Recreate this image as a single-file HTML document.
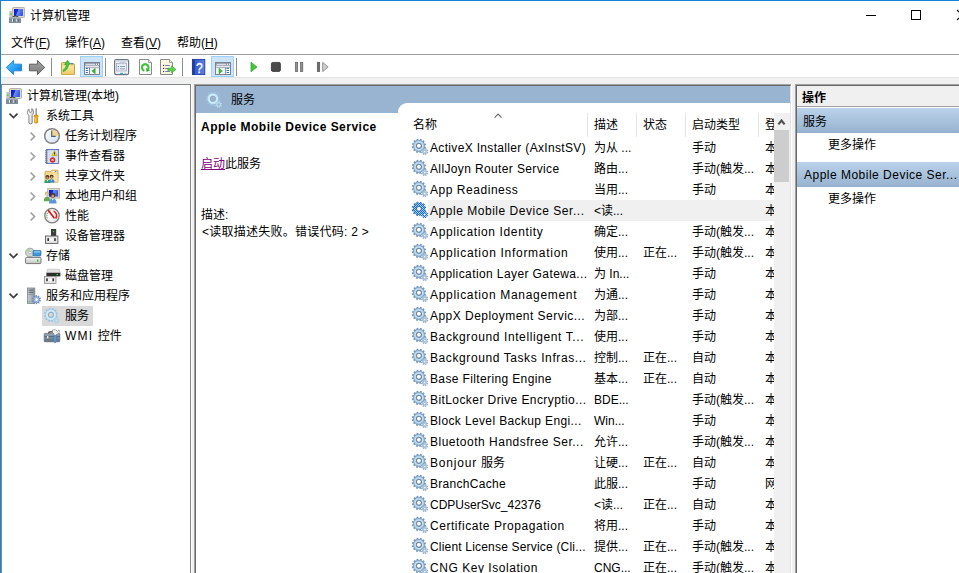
<!DOCTYPE html>
<html lang="zh-CN">
<head>
<meta charset="utf-8">
<title>计算机管理</title>
<style>
*{box-sizing:border-box;margin:0;padding:0}
html,body{width:959px;height:573px;overflow:hidden;background:#f0f0f0}
body{font-family:"Liberation Sans","Noto Sans CJK SC",sans-serif;font-size:12px;color:#000;position:relative}
.abs{position:absolute}
.t{position:absolute;white-space:nowrap;line-height:16px;height:16px}
svg{position:absolute;overflow:visible}
#win{position:absolute;left:0;top:0;width:959px;height:573px;overflow:hidden;background:#f0f0f0}
#title{position:absolute;left:1px;top:1px;width:958px;height:30px;background:#fff}
#menu{position:absolute;left:1px;top:31px;width:958px;height:23px;background:#fff}
#menuline{position:absolute;left:1px;top:54px;width:958px;height:1px;background:#a0a0a0}
#tool{position:absolute;left:1px;top:55px;width:958px;height:22px;background:#fff}
#toolline{position:absolute;left:1px;top:77px;width:958px;height:1px;background:#e3e3e3}
u{text-decoration:underline;text-underline-offset:1px}
#left{position:absolute;left:1px;top:84px;width:190px;height:495px;background:#fff;border-top:1px solid #828790;border-right:1px solid #828790;border-left:1px solid #828790}
#mid{position:absolute;left:194px;top:84px;width:598px;height:495px;background:#fff;border-top:2px solid #696969;border-left:2px solid #696969;border-right:2px solid #e3e3e3;overflow:hidden}
#right{position:absolute;left:795px;top:84px;width:170px;height:495px;background:#fff;border-top:2px solid #696969;border-left:2px solid #696969;overflow:hidden}
.ln{position:absolute}
#band{position:absolute;left:0;top:0;width:594px;height:27px;background:#99b4d1}
#list{position:absolute;left:398px;top:103px;width:392px;height:480px;background:#fff;border-top-left-radius:9px;overflow:hidden}
.row{position:absolute;left:0;width:376px;height:21px}
.row .t{top:3px}
.gi{left:14px;top:2px}
.selbg{position:absolute;left:30px;top:0;width:346px;height:21px;background:#f0f0f0}
.c1{left:32px}.c2{left:196px}.c3{left:245px}.c4{left:294px}.c5{left:367px}
.sep{position:absolute;top:10px;width:1px;height:24px;background:#e5e5e5}
.hd{top:14px}
.tb{position:absolute;background:#cce4f7;border:1px solid #99d1ff}
.tsep{position:absolute;top:58px;width:1px;height:18px;background:#8d8d8d}
.rband{position:absolute;left:0;width:170px;height:25px;background:linear-gradient(#bbd2ea,#9ab5d2 92%,#93aecb)}
</style>
</head>
<body>
<div id="win">
  <div id="title">
    <div class="t" style="left:29px;top:7px">计算机管理</div>
  </div>
  <div id="menu">
    <div class="t" style="left:10px;top:4px">文件(<u>F</u>)</div>
    <div class="t" style="left:64px;top:4px">操作(<u>A</u>)</div>
    <div class="t" style="left:120px;top:4px">查看(<u>V</u>)</div>
    <div class="t" style="left:176px;top:4px">帮助(<u>H</u>)</div>
  </div>
  <div id="menuline"></div>
  <div id="tool"></div>
  <div id="toolline"></div>
  <div class="tb" style="left:80px;top:56px;width:23px;height:21px"></div>
  <div class="tb" style="left:211px;top:56px;width:23px;height:21px"></div>
  <div class="tsep" style="left:51px"></div>
  <div class="tsep" style="left:105px"></div>
  <div class="tsep" style="left:182px"></div>
  <div class="tsep" style="left:236px"></div>

  <div id="left">
    <div class="t" style="left:25px;top:3px">计算机管理(本地)</div>
    <div class="t" style="left:44px;top:23px">系统工具</div>
    <div class="t" style="left:63px;top:43px">任务计划程序</div>
    <div class="t" style="left:63px;top:63px">事件查看器</div>
    <div class="t" style="left:63px;top:83px">共享文件夹</div>
    <div class="t" style="left:63px;top:103px">本地用户和组</div>
    <div class="t" style="left:63px;top:123px">性能</div>
    <div class="t" style="left:63px;top:143px">设备管理器</div>
    <div class="t" style="left:44px;top:163px">存储</div>
    <div class="t" style="left:63px;top:183px">磁盘管理</div>
    <div class="t" style="left:44px;top:203px">服务和应用程序</div>
    <div class="abs" style="left:40px;top:221px;width:51px;height:20px;background:#d9d9d9"></div>
    <div class="t" style="left:63px;top:223px">服务</div>
    <div class="t" style="left:63px;top:243px"><span style="letter-spacing:1.2px">WMI </span>控件</div>
  </div>

  <div id="mid">
    <div id="band"></div>
    <div class="t" style="left:35px;top:6px">服务</div>
  </div>
  <div id="list">
    <div class="t hd" style="left:15px">名称</div>
    <div class="t hd c2">描述</div>
    <div class="t hd c3">状态</div>
    <div class="t hd c4">启动类型</div>
    <div class="t hd c5">登</div>
    <div class="sep" style="left:189px"></div>
    <div class="sep" style="left:238px"></div>
    <div class="sep" style="left:287px"></div>
    <div class="sep" style="left:360px"></div>
<div class="row" style="top:34px"><div class="t c1" style="letter-spacing:0.33px">ActiveX Installer (AxInstSV)</div><div class="t c2">为从 ...</div><div class="t c4">手动</div><div class="t c5">本</div></div>
<div class="row" style="top:55px"><div class="t c1" style="letter-spacing:0.37px">AllJoyn Router Service</div><div class="t c2">路由...</div><div class="t c4">手动(触发...</div><div class="t c5">本</div></div>
<div class="row" style="top:76px"><div class="t c1" style="letter-spacing:0.54px">App Readiness</div><div class="t c2">当用...</div><div class="t c4">手动</div><div class="t c5">本</div></div>
<div class="row" style="top:97px"><div class="selbg"></div><div class="t c1" style="letter-spacing:0.53px">Apple Mobile Device Ser...</div><div class="t c2">&lt;读...</div><div class="t c5">本</div></div>
<div class="row" style="top:118px"><div class="t c1" style="letter-spacing:0.63px">Application Identity</div><div class="t c2">确定...</div><div class="t c4">手动(触发...</div><div class="t c5">本</div></div>
<div class="row" style="top:139px"><div class="t c1" style="letter-spacing:0.71px">Application Information</div><div class="t c2">使用...</div><div class="t c3">正在...</div><div class="t c4">手动(触发...</div><div class="t c5">本</div></div>
<div class="row" style="top:160px"><div class="t c1" style="letter-spacing:0.40px">Application Layer Gatewa...</div><div class="t c2">为 In...</div><div class="t c4">手动</div><div class="t c5">本</div></div>
<div class="row" style="top:181px"><div class="t c1" style="letter-spacing:0.69px">Application Management</div><div class="t c2">为通...</div><div class="t c4">手动</div><div class="t c5">本</div></div>
<div class="row" style="top:202px"><div class="t c1" style="letter-spacing:0.47px">AppX Deployment Servic...</div><div class="t c2">为部...</div><div class="t c4">手动</div><div class="t c5">本</div></div>
<div class="row" style="top:223px"><div class="t c1" style="letter-spacing:0.60px">Background Intelligent T...</div><div class="t c2">使用...</div><div class="t c4">手动</div><div class="t c5">本</div></div>
<div class="row" style="top:244px"><div class="t c1" style="letter-spacing:0.59px">Background Tasks Infras...</div><div class="t c2">控制...</div><div class="t c3">正在...</div><div class="t c4">自动</div><div class="t c5">本</div></div>
<div class="row" style="top:265px"><div class="t c1" style="letter-spacing:0.37px">Base Filtering Engine</div><div class="t c2">基本...</div><div class="t c3">正在...</div><div class="t c4">自动</div><div class="t c5">本</div></div>
<div class="row" style="top:286px"><div class="t c1" style="letter-spacing:0.42px">BitLocker Drive Encryptio...</div><div class="t c2">BDE...</div><div class="t c4">手动(触发...</div><div class="t c5">本</div></div>
<div class="row" style="top:307px"><div class="t c1" style="letter-spacing:0.37px">Block Level Backup Engi...</div><div class="t c2">Win...</div><div class="t c4">手动</div><div class="t c5">本</div></div>
<div class="row" style="top:328px"><div class="t c1" style="letter-spacing:0.50px">Bluetooth Handsfree Ser...</div><div class="t c2">允许...</div><div class="t c4">手动(触发...</div><div class="t c5">本</div></div>
<div class="row" style="top:349px"><div class="t c1"><span style="letter-spacing:0.80px">Bonjour </span>服务</div><div class="t c2">让硬...</div><div class="t c3">正在...</div><div class="t c4">自动</div><div class="t c5">本</div></div>
<div class="row" style="top:370px"><div class="t c1" style="letter-spacing:0.30px">BranchCache</div><div class="t c2">此服...</div><div class="t c4">手动</div><div class="t c5">网</div></div>
<div class="row" style="top:391px"><div class="t c1" style="letter-spacing:0.01px">CDPUserSvc_42376</div><div class="t c2">&lt;读...</div><div class="t c3">正在...</div><div class="t c4">自动</div><div class="t c5">本</div></div>
<div class="row" style="top:412px"><div class="t c1" style="letter-spacing:0.55px">Certificate Propagation</div><div class="t c2">将用...</div><div class="t c4">手动</div><div class="t c5">本</div></div>
<div class="row" style="top:433px"><div class="t c1" style="letter-spacing:0.19px">Client License Service (Cli...</div><div class="t c2">提供...</div><div class="t c3">正在...</div><div class="t c4">手动(触发...</div><div class="t c5">本</div></div>
<div class="row" style="top:454px"><div class="t c1" style="letter-spacing:0.54px">CNG Key Isolation</div><div class="t c2">CNG...</div><div class="t c3">正在...</div><div class="t c4">手动(触发...</div><div class="t c5">本</div></div>
    <div class="abs" style="left:376px;top:10px;width:16px;height:480px;background:#f0f0f0"></div>
    <div class="abs" style="left:376px;top:27px;width:15px;height:52px;background:#cdcdcd"></div>
  </div>
  <div class="abs" style="left:196px;top:113px;width:202px;height:200px;">
    <div class="t" style="left:5px;top:6px;font-weight:bold;letter-spacing:0.48px">Apple Mobile Device Service</div>
    <div class="t" style="left:5px;top:43px"><span style="color:#800080;text-decoration:underline">启动</span>此服务</div>
    <div class="t" style="left:5px;top:94px">描述:</div>
    <div class="t" style="left:6px;top:111px;letter-spacing:0.25px">&lt;读取描述失败。错误代码: 2 &gt;</div>
  </div>

  <div id="right">
    <div class="abs" style="left:0;top:0;width:170px;height:20px;background:#f0f0f0"></div>
    <div class="t" style="left:5px;top:4px;font-weight:bold">操作</div>
    <div class="abs" style="left:0;top:20px;width:170px;height:1px;background:#a0a0a0"></div>
    <div class="rband" style="top:22px"></div>
    <div class="t" style="left:6px;top:28px">服务</div>
    <div class="t" style="left:31px;top:51px">更多操作</div>
    <div class="rband" style="top:76px"></div>
    <div class="t" style="left:7px;top:81px;letter-spacing:0.49px">Apple Mobile Device Ser...</div>
    <div class="t" style="left:31px;top:105px">更多操作</div>
  </div>
  <div class="ln" style="left:191px;top:84px;width:1px;height:495px;background:#fafafa"></div>
  <div class="ln" style="left:194px;top:84px;width:598px;height:1px;background:#a0a0a0"></div>
  <div class="ln" style="left:194px;top:84px;width:1px;height:495px;background:#a0a0a0"></div>
  <div class="ln" style="left:791px;top:84px;width:1px;height:495px;background:#fff"></div>
  <div class="ln" style="left:795px;top:84px;width:170px;height:1px;background:#a0a0a0"></div>
  <div class="ln" style="left:795px;top:84px;width:1px;height:495px;background:#a0a0a0"></div>
<svg id="icons" width="959" height="573" viewBox="0 0 959 573" style="position:absolute;left:0;top:0;pointer-events:none">
<defs>
<linearGradient id="scr" x1="0" y1="0" x2="1" y2="0.3"><stop offset="0" stop-color="#0a12c8"/><stop offset="0.42" stop-color="#1230d8"/><stop offset="0.5" stop-color="#6f8ef2"/><stop offset="1" stop-color="#3a5ce6"/></linearGradient>
<linearGradient id="gblue" x1="0" y1="0" x2="1" y2="1"><stop offset="0" stop-color="#5cc8ff"/><stop offset="0.5" stop-color="#2ea6f4"/><stop offset="1" stop-color="#0468cc"/></linearGradient>
<linearGradient id="ggray" x1="0" y1="0" x2="0" y2="1"><stop offset="0" stop-color="#a4a4a4"/><stop offset="1" stop-color="#7c7c7c"/></linearGradient>
<linearGradient id="gfold" x1="0" y1="0" x2="0" y2="1"><stop offset="0" stop-color="#fbe8a6"/><stop offset="1" stop-color="#edc96a"/></linearGradient>
<linearGradient id="ghelp" x1="0" y1="0" x2="1" y2="0"><stop offset="0" stop-color="#3050c0"/><stop offset="1" stop-color="#5e80e4"/></linearGradient>
<linearGradient id="gwr" x1="0" y1="0" x2="1" y2="0"><stop offset="0" stop-color="#ffffff"/><stop offset="1" stop-color="#d0d0d0"/></linearGradient>
<linearGradient id="gclock" x1="0" y1="0" x2="1" y2="1"><stop offset="0" stop-color="#ffffff"/><stop offset="1" stop-color="#cfe0f0"/></linearGradient>
<linearGradient id="gdrive" x1="0" y1="0" x2="0" y2="1"><stop offset="0" stop-color="#f4f4f4"/><stop offset="1" stop-color="#c4c4c4"/></linearGradient>
<linearGradient id="gtower" x1="0" y1="0" x2="1" y2="0"><stop offset="0" stop-color="#c8ced4"/><stop offset="1" stop-color="#8e969e"/></linearGradient>
<linearGradient id="gbox" x1="0" y1="0" x2="0" y2="1"><stop offset="0" stop-color="#9aa8b4"/><stop offset="1" stop-color="#5e6c78"/></linearGradient>
<pattern id="dith" width="2" height="2" patternUnits="userSpaceOnUse"><rect x="0" y="0" width="1" height="1" fill="#0a6fd8"/><rect x="1" y="1" width="1" height="1" fill="#0a6fd8"/></pattern>
</defs><g transform="translate(9,7)">
 <rect x="3.5" y="0.5" width="12" height="10" rx="0.8" fill="#dddbd0" stroke="#b6b4a8"/>
 <rect x="5" y="2" width="9" height="7" fill="url(#scr)"/>
 <rect x="0.3" y="4" width="3" height="6.5" fill="#c4c4c4"/>
 <rect x="0.9" y="6.5" width="1.8" height="1.3" fill="#38d838"/>
 <path d="M3.8 10.3 Q6.5 7.4 9.2 10.3" stroke="#3a3a3a" stroke-width="1.3" fill="none"/>
 <rect x="0" y="10" width="12" height="6" fill="#7f8e9c"/>
 <rect x="0" y="10" width="12" height="1.5" fill="#a9b5bf"/>
 <rect x="3" y="12.2" width="1.2" height="2.4" fill="#fff"/><rect x="4.2" y="12.2" width="1" height="2.4" fill="#4a5560"/>
 <rect x="7.3" y="12.2" width="1.2" height="2.4" fill="#fff"/><rect x="8.5" y="12.2" width="1" height="2.4" fill="#4a5560"/>
</g>
<!-- back / forward -->
<path d="M6.3 67.5 L13.6 60.4 V64.2 H21.6 V70.8 H13.6 V74.6Z" fill="url(#gblue)" stroke="#2b86d6" stroke-width="1" stroke-linejoin="round"/>
<path d="M44.7 67.5 L37.4 60.4 V64.2 H29.4 V70.8 H37.4 V74.6Z" fill="url(#ggray)" stroke="#5e5e5e" stroke-width="1" stroke-linejoin="round"/>
<!-- folder up -->
<path d="M61.5 63.5 q0-1 1-1 h4 l1 1.2 h6 q1 0 1 1 v9.8 h-13z" fill="#efcf7c" stroke="#c9a24c"/>
<rect x="62" y="65.6" width="12" height="8.6" fill="url(#gfold)"/>
<path d="M62.8 70.4 C65 69 66.2 66.8 66.3 64.4 L64.6 64.6 L67.4 60.3 L70.3 64 L68.6 64.2 C68.4 67.8 66.4 70.4 63.4 71.6Z" fill="#3fcb3c" stroke="#2c9f2a" stroke-width="0.6"/>
<rect x="70.8" y="63" width="2.4" height="1.3" rx="0.6" fill="#3f7de0"/>
<!-- window w/ left arrow -->
<rect x="84.5" y="62.5" width="15" height="12" fill="#f6f6f6" stroke="#7b8292"/>
<rect x="85" y="63" width="14" height="2.8" fill="#8c93a3"/>
<rect x="85.6" y="63.8" width="9.4" height="1" fill="#eceef3"/>
<rect x="96" y="63.7" width="1" height="1.2" fill="#fff"/><rect x="98" y="63.7" width="1" height="1.2" fill="#fff"/>
<rect x="85" y="65.8" width="14" height="1.6" fill="#e4e7ee"/>
<rect x="85" y="67.4" width="14" height="0.7" fill="#8c93a3"/>
<rect x="85" y="68" width="4" height="6" fill="#fff"/>
<rect x="89" y="67.6" width="0.9" height="6.6" fill="#7b8292"/>
<rect x="85.7" y="68" width="2.4" height="1" fill="#3a78c8"/><rect x="85.7" y="70" width="2.4" height="1" fill="#3a78c8"/><rect x="85.7" y="72" width="2.4" height="1" fill="#3a78c8"/>
<path d="M91.8 71 L95.2 68.3 V73.7Z" fill="#3cb83c" stroke="#2c9f2a" stroke-width="0.5"/>
<!-- properties -->
<rect x="114.6" y="59.6" width="14" height="15" rx="1.6" fill="#f3f5fa" stroke="#6d7585" stroke-width="1.2"/>
<rect x="115.4" y="60.4" width="12.4" height="1.4" fill="#cfd4de"/>
<rect x="116.5" y="63.4" width="10" height="7.6" fill="#e8ecf5" stroke="#a5adc2" stroke-width="0.8"/>
<rect x="120" y="62.6" width="2.4" height="1.2" fill="#f3f5fa" stroke="#a5adc2" stroke-width="0.5"/><rect x="123" y="62.6" width="2.4" height="1.2" fill="#f3f5fa" stroke="#a5adc2" stroke-width="0.5"/>
<circle cx="118.4" cy="66.6" r="0.7" fill="#1f9df2"/><rect x="120" y="66.1" width="5" height="0.9" fill="#8a92a4"/>
<circle cx="118.4" cy="68.8" r="0.6" fill="#8a92a4"/><rect x="120" y="68.4" width="5" height="0.9" fill="#8a92a4"/>
<rect x="120" y="72.8" width="3" height="1.3" fill="#2fb2f2"/><rect x="124" y="72.8" width="2.6" height="1.3" fill="#c3c7cf"/>
<!-- refresh -->
<path d="M139.5 59.5 h9 l3 3 v12 h-12z" fill="#fdfdfd" stroke="#8a8a8a"/>
<path d="M148.5 59.5 v3 h3" fill="#e6e6e6" stroke="#8a8a8a" stroke-width="0.8"/>
<path d="M144.4 70.7 A3.3 3.3 0 1 1 148.1 69.15" fill="none" stroke="#3fc23c" stroke-width="2.2"/>
<path d="M150.3 70.3 L145.9 67.9 L146.6 71.9Z" fill="#2fb02c"/>
<!-- export -->
<path d="M160.5 59.5 h9 l3 3 v12 h-12z" fill="#fbf6de" stroke="#8a8a8a"/>
<path d="M169.5 59.5 v3 h3" fill="#f0ead0" stroke="#8a8a8a" stroke-width="0.8"/>
<rect x="163" y="64.9" width="1.1" height="1.1" fill="#26264e"/><rect x="165.2" y="65" width="4.6" height="0.9" fill="#6c6cb0"/>
<rect x="163" y="67.9" width="1.1" height="1.1" fill="#26264e"/><rect x="165.2" y="68" width="4.6" height="0.9" fill="#6c6cb0"/>
<rect x="163" y="71" width="1.1" height="1.1" fill="#26264e"/><rect x="165.2" y="71.1" width="4.6" height="0.9" fill="#6c6cb0"/>
<path d="M167.9 68.2 H171.6 V65.8 L176 69.4 L171.6 73 V70.8 H167.9Z" fill="#5bd04c" stroke="#2c9f2a" stroke-width="0.6"/>
<!-- help -->
<rect x="192.4" y="59.4" width="12.4" height="15.2" fill="url(#ghelp)" stroke="#1d3c9e" stroke-width="0.9"/>
<rect x="192.4" y="59.4" width="2.4" height="15.2" fill="#1d3c9e"/>
<text transform="translate(199.4 0) scale(0.78 1)" x="0" y="72.8" font-family="Liberation Sans, sans-serif" font-size="15.5" fill="#fff" stroke="#fff" stroke-width="0.3" text-anchor="middle">?</text>
<!-- window w/ right arrow -->
<rect x="215.5" y="62.5" width="15" height="12" fill="#f6f6f6" stroke="#7b8292"/>
<rect x="216" y="63" width="14" height="2.8" fill="#8c93a3"/>
<rect x="216.6" y="63.8" width="9.4" height="1" fill="#eceef3"/>
<rect x="227" y="63.7" width="1" height="1.2" fill="#fff"/><rect x="229" y="63.7" width="1" height="1.2" fill="#fff"/>
<rect x="216" y="65.8" width="14" height="1.6" fill="#e4e7ee"/>
<rect x="216" y="67.4" width="14" height="0.7" fill="#8c93a3"/>
<rect x="226" y="68" width="4" height="6" fill="#fff"/>
<rect x="225.2" y="67.6" width="0.9" height="6.6" fill="#7b8292"/>
<rect x="226.6" y="68" width="2.4" height="1" fill="#3a78c8"/><rect x="226.6" y="70" width="2.4" height="1" fill="#3a78c8"/><rect x="226.6" y="72" width="2.4" height="1" fill="#3a78c8"/>
<path d="M222.4 71 L219 68.3 V73.7Z" fill="#3cb83c" stroke="#2c9f2a" stroke-width="0.5"/>
<!-- play stop pause step -->
<path d="M251 62.2 L257 67 L251 71.8Z" fill="#46c43c" stroke="#2c9f2a" stroke-width="0.7" stroke-linejoin="round"/>
<rect x="271.4" y="62.4" width="9" height="9" rx="1.4" fill="#4a4a4a" stroke="#333" stroke-width="0.8"/>
<rect x="295.3" y="62.3" width="2.4" height="9.3" fill="#909090" stroke="#606060" stroke-width="0.7"/>
<rect x="300.4" y="62.3" width="2.4" height="9.3" fill="#909090" stroke="#606060" stroke-width="0.7"/>
<rect x="317.3" y="62.3" width="2.4" height="9.3" fill="#707070" stroke="#505050" stroke-width="0.7"/>
<path d="M322.7 62.4 L328.2 67 L322.7 71.6Z" fill="#cfcfcf" stroke="#7c7c7c" stroke-width="0.8" stroke-linejoin="round"/>
<g transform="translate(6,88)">
 <rect x="3.5" y="0.5" width="12" height="10" rx="0.8" fill="#dddbd0" stroke="#b6b4a8"/>
 <rect x="5" y="2" width="9" height="7" fill="url(#scr)"/>
 <rect x="0.3" y="4" width="3" height="6.5" fill="#c4c4c4"/>
 <rect x="0.9" y="6.5" width="1.8" height="1.3" fill="#38d838"/>
 <path d="M3.8 10.3 Q6.5 7.4 9.2 10.3" stroke="#3a3a3a" stroke-width="1.3" fill="none"/>
 <rect x="0" y="10" width="12" height="6" fill="#7f8e9c"/>
 <rect x="0" y="10" width="12" height="1.5" fill="#a9b5bf"/>
 <rect x="3" y="12.2" width="1.2" height="2.4" fill="#fff"/><rect x="4.2" y="12.2" width="1" height="2.4" fill="#4a5560"/>
 <rect x="7.3" y="12.2" width="1.2" height="2.4" fill="#fff"/><rect x="8.5" y="12.2" width="1" height="2.4" fill="#4a5560"/>
</g><path d="M9.5 113.6 L13.5 117.6 L17.5 113.6" fill="none" stroke="#3c3c3c" stroke-width="1.6"/><path d="M9.5 253.6 L13.5 257.6 L17.5 253.6" fill="none" stroke="#3c3c3c" stroke-width="1.6"/><path d="M9.5 293.6 L13.5 297.6 L17.5 293.6" fill="none" stroke="#3c3c3c" stroke-width="1.6"/><path d="M30.6 132.5 L34.6 136.5 L30.6 140.5" fill="none" stroke="#a3a3a3" stroke-width="1.7"/><path d="M30.6 152.5 L34.6 156.5 L30.6 160.5" fill="none" stroke="#a3a3a3" stroke-width="1.7"/><path d="M30.6 172.5 L34.6 176.5 L30.6 180.5" fill="none" stroke="#a3a3a3" stroke-width="1.7"/><path d="M30.6 192.5 L34.6 196.5 L30.6 200.5" fill="none" stroke="#a3a3a3" stroke-width="1.7"/><path d="M30.6 212.5 L34.6 216.5 L30.6 220.5" fill="none" stroke="#a3a3a3" stroke-width="1.7"/>
<path d="M28.9 123.2 V115.4 C26.9 114.2 26.8 110.6 28.9 108.9 L29.2 111.9 L30.6 112.5 L32 111.4 L31.8 108.5 C34 109.6 34.2 113.6 32.2 115.2 V123.2 Q30.6 124.4 28.9 123.2Z" fill="url(#gwr)" stroke="#7c7c7c" stroke-width="0.9"/>
<rect x="35.6" y="108.3" width="1.1" height="7.2" fill="#6c6c6c"/>
<path d="M34.7 115 h2.9 l0.5 1.5 l-0.7 1.1 l0.3 4.9 q-1.5 1.3-3.1 0 l0.3-4.9 l-0.7-1.1z" fill="#f4ae0e" stroke="#b87800" stroke-width="0.7"/>
<rect x="35.3" y="118" width="0.8" height="4" fill="#ffd860"/>

<circle cx="52" cy="136" r="7.3" fill="url(#gclock)" stroke="#808080" stroke-width="1.5"/>
<path d="M52 136 V129.6 A6.4 6.4 0 0 1 58.4 136Z" fill="#f1d48a"/>
<path d="M51.7 130.6 V136.4 H55.7" fill="none" stroke="#4a5a78" stroke-width="1.1"/>

<rect x="46.4" y="149.5" width="12.2" height="14" fill="#c6d6f0" stroke="#6078ba" stroke-width="1"/>
<path d="M47.5 152 h10.5 M47.5 154 h10.5 M47.5 156 h10.5 M47.5 158 h10.5 M47.5 160 h10.5 M47.5 162 h10.5" stroke="#e6eefa" stroke-width="0.9"/>
<path d="M45 150.8 h2.6 M45 152.8 h2.6 M45 154.8 h2.6 M45 156.8 h2.6 M45 158.8 h2.6 M45 160.8 h2.6 M45 162.6 h2.6" stroke="#7a7a7a" stroke-width="1"/>
<path d="M54.5 150.7 L57.2 155.7 H51.8Z" fill="#f8d61e" stroke="#b09210" stroke-width="0.5"/>
<rect x="54.1" y="152.3" width="0.9" height="1.9" fill="#222"/><rect x="54.1" y="154.5" width="0.9" height="0.7" fill="#222"/>
<circle cx="52.6" cy="159.9" r="2.5" fill="#e02828" stroke="#a01010" stroke-width="0.4"/>
<path d="M51.6 158.9 l2 2 M53.6 158.9 l-2 2" stroke="#fff" stroke-width="0.8"/>

<path d="M45 172.4 q0-1 1-1 h5 l1-1.2 h5 q1 0 1 1 v11 h-13z" fill="#f3d88c" stroke="#c9a24c" stroke-width="0.9"/>
<rect x="52.6" y="171" width="3.4" height="1.1" rx="0.5" fill="#fff"/><rect x="54.6" y="171" width="1.6" height="1.1" rx="0.5" fill="#3f7de0"/>
<rect x="51.6" y="173.4" width="6" height="8.8" fill="#f8e3a4"/>
<circle cx="47.4" cy="177" r="1.9" fill="#4a3020"/><path d="M44.4 183 q0-3.6 3-3.6 q3 0 3 3.6z" fill="#2fa565"/><circle cx="47.4" cy="177.6" r="1.1" fill="#d8a070"/>
<circle cx="51.6" cy="176.6" r="1.9" fill="#3a2a20"/><path d="M48.6 182.6 q0-3.6 3-3.6 q3 0 3 3.6z" fill="#3a86cf"/><circle cx="51.6" cy="177.2" r="1.1" fill="#d8a070"/>
<path d="M46.6 180 l0.8 1.4 l0.8-1.4z" fill="#fff"/><path d="M50.8 179.6 l0.8 1.4 l0.8-1.4z" fill="#fff"/>

<rect x="47.6" y="188.5" width="12" height="9.6" fill="#dddbd0" stroke="#b6b4a8" stroke-width="0.9"/>
<rect x="49" y="190" width="9.2" height="6.6" fill="url(#scr)"/>
<circle cx="47" cy="193.6" r="2.2" fill="#cdb878"/><circle cx="47" cy="194.3" r="1.3" fill="#e8c8a0"/>
<path d="M43.8 201.2 q0-4.4 3.2-4.4 q3.2 0 3.2 4.4z" fill="#6aa858"/>
<circle cx="52.8" cy="195.2" r="2.5" fill="#4a3424"/><circle cx="52.8" cy="196" r="1.5" fill="#c89870"/>
<path d="M49 203.6 q0-5 3.8-5 q3.8 0 3.8 5z" fill="#5a96d6"/>
<path d="M51.8 198.8 l1 1.8 l1-1.8z" fill="#fff"/>

<circle cx="52" cy="215.6" r="7.2" fill="#fcfcfa" stroke="#7e7e7e" stroke-width="1.3"/>
<circle cx="52" cy="215.6" r="5.6" fill="none" stroke="#d8d8d0" stroke-width="0.8"/>
<path d="M47.4 218 A5 5 0 0 1 50.4 211" fill="none" stroke="#50a050" stroke-width="1" stroke-dasharray="1 1"/>
<path d="M53.6 211.2 A4.8 4.8 0 0 1 55.6 218.6" fill="none" stroke="#e02020" stroke-width="1.6"/>
<path d="M48.6 210.8 L54 217.8" stroke="#e01818" stroke-width="1.8" stroke-linecap="round"/>

<rect x="51" y="229" width="5.2" height="7.2" fill="#3c3c3c"/>
<rect x="53" y="231" width="1.2" height="1.2" fill="#38e038"/>
<rect x="45.5" y="236" width="12.4" height="7.4" fill="#e4e4e4" stroke="#5e5e5e" stroke-width="0.9"/>
<rect x="47.4" y="238.2" width="1.6" height="2.8" fill="#333"/><rect x="54.2" y="238.2" width="1.6" height="2.8" fill="#333"/>
<rect x="49.6" y="238.6" width="4" height="2" fill="#fff"/>

<circle cx="30" cy="252.6" r="4.4" fill="#d4d4d4" stroke="#909090" stroke-width="0.8"/>
<path d="M30 252.6 L26.2 250.4 A4.4 4.4 0 0 1 29 248.3Z" fill="#a8d890"/>
<circle cx="30" cy="252.6" r="1.3" fill="#fff" stroke="#909090" stroke-width="0.5"/>
<rect x="33" y="250.4" width="8" height="5.6" rx="1" fill="#3f97d8" stroke="#2a6eae" stroke-width="0.7"/>
<rect x="34" y="251.2" width="6" height="1.4" fill="#8cc6ee"/>
<rect x="25.6" y="257.4" width="15.4" height="6.2" rx="1" fill="url(#gdrive)" stroke="#6a6a6a" stroke-width="0.9"/>
<rect x="37" y="259.4" width="1.4" height="2.4" fill="#38c838"/>

<path d="M47.6 269.2 h11.6 l1 3.6 h-13.6z" fill="#e2e2e2" stroke="#b0b0b0" stroke-width="0.5"/>
<rect x="46.4" y="272.8" width="14" height="3.6" fill="#2e2e2e"/>
<rect x="56.6" y="274" width="1.4" height="1.2" fill="#38e038"/>
<rect x="44.4" y="276.4" width="11.6" height="7" fill="#e4e4e4" stroke="#8a8a8a" stroke-width="0.8"/>
<rect x="46.2" y="278.4" width="1.6" height="2.8" fill="#333"/><rect x="52.4" y="278.4" width="1.6" height="2.8" fill="#333"/>
<rect x="48.4" y="278.8" width="3.4" height="2" fill="#fff"/>

<rect x="27.4" y="288" width="7.4" height="15.4" fill="url(#gtower)" stroke="#7c848c" stroke-width="0.8"/>
<rect x="28.6" y="289.6" width="5" height="1" fill="#5a626a"/><rect x="28.6" y="291.8" width="5" height="1" fill="#5a626a"/><rect x="28.6" y="294" width="5" height="0.9" fill="#8a929a"/>
<rect x="28.6" y="301" width="1.2" height="1.2" fill="#38c838"/>
<path d="M39.88 299.95 L41.04 300.33 L40.69 301.52 L39.51 301.21 L39.01 301.93 L39.73 302.92 L38.74 303.67 L37.97 302.73 L37.14 303.02 L37.14 304.24 L35.90 304.27 L35.83 303.05 L34.99 302.80 L34.27 303.79 L33.25 303.09 L33.91 302.06 L33.38 301.36 L32.21 301.74 L31.80 300.57 L32.94 300.13 L32.92 299.25 L31.76 298.87 L32.11 297.68 L33.29 297.99 L33.79 297.27 L33.07 296.28 L34.06 295.53 L34.83 296.47 L35.66 296.18 L35.66 294.96 L36.90 294.93 L36.97 296.15 L37.81 296.40 L38.53 295.41 L39.55 296.11 L38.89 297.14 L39.42 297.84 L40.59 297.46 L41.00 298.63 L39.86 299.07Z M34.90 299.60 a1.50 1.50 0 1 0 3.00 0 a1.50 1.50 0 1 0 -3.00 0Z" fill="#6f8fc4" fill-rule="evenodd"/>
<circle cx="36.4" cy="299.6" r="2.4" fill="none" stroke="#a9c3e6" stroke-width="1"/>
<g transform="translate(44,308)" fill-rule="evenodd">
 <path d="M12.75 7.56 L13.98 8.09 L13.49 9.70 L12.17 9.45 L11.58 10.39 L12.39 11.46 L11.16 12.61 L10.14 11.73 L9.16 12.25 L9.32 13.58 L7.68 13.96 L7.24 12.69 L6.14 12.65 L5.61 13.88 L4.00 13.39 L4.25 12.07 L3.31 11.48 L2.24 12.29 L1.09 11.06 L1.97 10.04 L1.45 9.06 L0.12 9.22 L-0.26 7.58 L1.01 7.14 L1.05 6.04 L-0.18 5.51 L0.31 3.90 L1.63 4.15 L2.22 3.21 L1.41 2.14 L2.64 0.99 L3.66 1.87 L4.64 1.35 L4.48 0.02 L6.12 -0.36 L6.56 0.91 L7.66 0.95 L8.19 -0.28 L9.80 0.21 L9.55 1.53 L10.49 2.12 L11.56 1.31 L12.71 2.54 L11.83 3.56 L12.35 4.54 L13.68 4.38 L14.06 6.02 L12.79 6.46Z M4.80 6.80 a2.10 2.10 0 1 0 4.20 0 a2.10 2.10 0 1 0 -4.20 0Z" fill="#9fc4e2"/>
 <circle cx="6.9" cy="6.8" r="4.1" fill="none" stroke="#cdeaf8" stroke-width="2.2"/>
 <circle cx="6.9" cy="6.8" r="2.6" fill="none" stroke="#8c9aa8" stroke-width="0.7"/>
 <path d="M15.25 13.04 L16.17 13.47 L15.72 14.49 L14.78 14.09 L14.09 14.75 L14.44 15.71 L13.40 16.11 L13.01 15.17 L12.06 15.15 L11.63 16.07 L10.61 15.62 L11.01 14.68 L10.35 13.99 L9.39 14.34 L8.99 13.30 L9.93 12.91 L9.95 11.96 L9.03 11.53 L9.48 10.51 L10.42 10.91 L11.11 10.25 L10.76 9.29 L11.80 8.89 L12.19 9.83 L13.14 9.85 L13.57 8.93 L14.59 9.38 L14.19 10.32 L14.85 11.01 L15.81 10.66 L16.21 11.70 L15.27 12.09Z M11.60 12.50 a1.00 1.00 0 1 0 2.00 0 a1.00 1.00 0 1 0 -2.00 0Z" fill="#b4d4ea"/>
</g>
<path d="M48.6 333.4 q0-1.6 1.6-1.6 h3 q1.6 0 1.6 1.6" fill="none" stroke="#2c2c2c" stroke-width="1.3"/>
<rect x="44.2" y="333.4" width="15.6" height="8.4" rx="0.8" fill="url(#gbox)" stroke="#5a6874" stroke-width="0.7"/>
<rect x="44.2" y="336.2" width="15.6" height="0.8" fill="#55626e"/>
<rect x="47" y="336" width="1.4" height="2.4" fill="#e8e8e8"/>
<path d="M55.2 329.6 l2.2 1.6 l1.8-1.2 q0.8 2.6-1.4 4 l-1.4 0.2 l-0.2 7.6 q-1.2 1.4-2.4 0 l0.2-7.8 q-2.2-1.2-1.6-4z" fill="#f4f4f4" stroke="#7a7a7a" stroke-width="0.6"/>
<path d="M53.9 335.4 h2.5 l-0.2 6.4 q-1.2 1.4-2.4 0z" fill="#5b9be0" stroke="#2f66b0" stroke-width="0.5"/>
<g transform="translate(206,92)" fill-rule="evenodd">
 <path d="M12.75 7.56 L13.98 8.09 L13.49 9.70 L12.17 9.45 L11.58 10.39 L12.39 11.46 L11.16 12.61 L10.14 11.73 L9.16 12.25 L9.32 13.58 L7.68 13.96 L7.24 12.69 L6.14 12.65 L5.61 13.88 L4.00 13.39 L4.25 12.07 L3.31 11.48 L2.24 12.29 L1.09 11.06 L1.97 10.04 L1.45 9.06 L0.12 9.22 L-0.26 7.58 L1.01 7.14 L1.05 6.04 L-0.18 5.51 L0.31 3.90 L1.63 4.15 L2.22 3.21 L1.41 2.14 L2.64 0.99 L3.66 1.87 L4.64 1.35 L4.48 0.02 L6.12 -0.36 L6.56 0.91 L7.66 0.95 L8.19 -0.28 L9.80 0.21 L9.55 1.53 L10.49 2.12 L11.56 1.31 L12.71 2.54 L11.83 3.56 L12.35 4.54 L13.68 4.38 L14.06 6.02 L12.79 6.46Z M4.80 6.80 a2.10 2.10 0 1 0 4.20 0 a2.10 2.10 0 1 0 -4.20 0Z" fill="#9fc4e2"/>
 <circle cx="6.9" cy="6.8" r="4.1" fill="none" stroke="#cdeaf8" stroke-width="2.2"/>
 <circle cx="6.9" cy="6.8" r="2.6" fill="none" stroke="#8c9aa8" stroke-width="0.7"/>
 <path d="M15.25 13.04 L16.17 13.47 L15.72 14.49 L14.78 14.09 L14.09 14.75 L14.44 15.71 L13.40 16.11 L13.01 15.17 L12.06 15.15 L11.63 16.07 L10.61 15.62 L11.01 14.68 L10.35 13.99 L9.39 14.34 L8.99 13.30 L9.93 12.91 L9.95 11.96 L9.03 11.53 L9.48 10.51 L10.42 10.91 L11.11 10.25 L10.76 9.29 L11.80 8.89 L12.19 9.83 L13.14 9.85 L13.57 8.93 L14.59 9.38 L14.19 10.32 L14.85 11.01 L15.81 10.66 L16.21 11.70 L15.27 12.09Z M11.60 12.50 a1.00 1.00 0 1 0 2.00 0 a1.00 1.00 0 1 0 -2.00 0Z" fill="#b4d4ea"/>
</g><g transform="translate(412,139)" fill-rule="evenodd">
 <path d="M12.75 7.56 L13.98 8.09 L13.49 9.70 L12.17 9.45 L11.58 10.39 L12.39 11.46 L11.16 12.61 L10.14 11.73 L9.16 12.25 L9.32 13.58 L7.68 13.96 L7.24 12.69 L6.14 12.65 L5.61 13.88 L4.00 13.39 L4.25 12.07 L3.31 11.48 L2.24 12.29 L1.09 11.06 L1.97 10.04 L1.45 9.06 L0.12 9.22 L-0.26 7.58 L1.01 7.14 L1.05 6.04 L-0.18 5.51 L0.31 3.90 L1.63 4.15 L2.22 3.21 L1.41 2.14 L2.64 0.99 L3.66 1.87 L4.64 1.35 L4.48 0.02 L6.12 -0.36 L6.56 0.91 L7.66 0.95 L8.19 -0.28 L9.80 0.21 L9.55 1.53 L10.49 2.12 L11.56 1.31 L12.71 2.54 L11.83 3.56 L12.35 4.54 L13.68 4.38 L14.06 6.02 L12.79 6.46Z M4.80 6.80 a2.10 2.10 0 1 0 4.20 0 a2.10 2.10 0 1 0 -4.20 0Z" fill="#7396ba"/>
 <circle cx="6.9" cy="6.8" r="4.3" fill="none" stroke="#9dbcd8" stroke-width="2.4"/>
 <circle cx="6.9" cy="6.8" r="3.9" fill="none" stroke="#c2def2" stroke-width="1.5"/>
 <circle cx="6.9" cy="6.8" r="2.5" fill="none" stroke="#76869a" stroke-width="0.9"/>
 <path d="M15.25 13.04 L16.17 13.47 L15.72 14.49 L14.78 14.09 L14.09 14.75 L14.44 15.71 L13.40 16.11 L13.01 15.17 L12.06 15.15 L11.63 16.07 L10.61 15.62 L11.01 14.68 L10.35 13.99 L9.39 14.34 L8.99 13.30 L9.93 12.91 L9.95 11.96 L9.03 11.53 L9.48 10.51 L10.42 10.91 L11.11 10.25 L10.76 9.29 L11.80 8.89 L12.19 9.83 L13.14 9.85 L13.57 8.93 L14.59 9.38 L14.19 10.32 L14.85 11.01 L15.81 10.66 L16.21 11.70 L15.27 12.09Z M11.60 12.50 a1.00 1.00 0 1 0 2.00 0 a1.00 1.00 0 1 0 -2.00 0Z" fill="#86a5c3"/>
 <circle cx="12.6" cy="12.5" r="1.9" fill="none" stroke="#c3dbee" stroke-width="0.9"/>
</g><g transform="translate(412,160)" fill-rule="evenodd">
 <path d="M12.75 7.56 L13.98 8.09 L13.49 9.70 L12.17 9.45 L11.58 10.39 L12.39 11.46 L11.16 12.61 L10.14 11.73 L9.16 12.25 L9.32 13.58 L7.68 13.96 L7.24 12.69 L6.14 12.65 L5.61 13.88 L4.00 13.39 L4.25 12.07 L3.31 11.48 L2.24 12.29 L1.09 11.06 L1.97 10.04 L1.45 9.06 L0.12 9.22 L-0.26 7.58 L1.01 7.14 L1.05 6.04 L-0.18 5.51 L0.31 3.90 L1.63 4.15 L2.22 3.21 L1.41 2.14 L2.64 0.99 L3.66 1.87 L4.64 1.35 L4.48 0.02 L6.12 -0.36 L6.56 0.91 L7.66 0.95 L8.19 -0.28 L9.80 0.21 L9.55 1.53 L10.49 2.12 L11.56 1.31 L12.71 2.54 L11.83 3.56 L12.35 4.54 L13.68 4.38 L14.06 6.02 L12.79 6.46Z M4.80 6.80 a2.10 2.10 0 1 0 4.20 0 a2.10 2.10 0 1 0 -4.20 0Z" fill="#7396ba"/>
 <circle cx="6.9" cy="6.8" r="4.3" fill="none" stroke="#9dbcd8" stroke-width="2.4"/>
 <circle cx="6.9" cy="6.8" r="3.9" fill="none" stroke="#c2def2" stroke-width="1.5"/>
 <circle cx="6.9" cy="6.8" r="2.5" fill="none" stroke="#76869a" stroke-width="0.9"/>
 <path d="M15.25 13.04 L16.17 13.47 L15.72 14.49 L14.78 14.09 L14.09 14.75 L14.44 15.71 L13.40 16.11 L13.01 15.17 L12.06 15.15 L11.63 16.07 L10.61 15.62 L11.01 14.68 L10.35 13.99 L9.39 14.34 L8.99 13.30 L9.93 12.91 L9.95 11.96 L9.03 11.53 L9.48 10.51 L10.42 10.91 L11.11 10.25 L10.76 9.29 L11.80 8.89 L12.19 9.83 L13.14 9.85 L13.57 8.93 L14.59 9.38 L14.19 10.32 L14.85 11.01 L15.81 10.66 L16.21 11.70 L15.27 12.09Z M11.60 12.50 a1.00 1.00 0 1 0 2.00 0 a1.00 1.00 0 1 0 -2.00 0Z" fill="#86a5c3"/>
 <circle cx="12.6" cy="12.5" r="1.9" fill="none" stroke="#c3dbee" stroke-width="0.9"/>
</g><g transform="translate(412,181)" fill-rule="evenodd">
 <path d="M12.75 7.56 L13.98 8.09 L13.49 9.70 L12.17 9.45 L11.58 10.39 L12.39 11.46 L11.16 12.61 L10.14 11.73 L9.16 12.25 L9.32 13.58 L7.68 13.96 L7.24 12.69 L6.14 12.65 L5.61 13.88 L4.00 13.39 L4.25 12.07 L3.31 11.48 L2.24 12.29 L1.09 11.06 L1.97 10.04 L1.45 9.06 L0.12 9.22 L-0.26 7.58 L1.01 7.14 L1.05 6.04 L-0.18 5.51 L0.31 3.90 L1.63 4.15 L2.22 3.21 L1.41 2.14 L2.64 0.99 L3.66 1.87 L4.64 1.35 L4.48 0.02 L6.12 -0.36 L6.56 0.91 L7.66 0.95 L8.19 -0.28 L9.80 0.21 L9.55 1.53 L10.49 2.12 L11.56 1.31 L12.71 2.54 L11.83 3.56 L12.35 4.54 L13.68 4.38 L14.06 6.02 L12.79 6.46Z M4.80 6.80 a2.10 2.10 0 1 0 4.20 0 a2.10 2.10 0 1 0 -4.20 0Z" fill="#7396ba"/>
 <circle cx="6.9" cy="6.8" r="4.3" fill="none" stroke="#9dbcd8" stroke-width="2.4"/>
 <circle cx="6.9" cy="6.8" r="3.9" fill="none" stroke="#c2def2" stroke-width="1.5"/>
 <circle cx="6.9" cy="6.8" r="2.5" fill="none" stroke="#76869a" stroke-width="0.9"/>
 <path d="M15.25 13.04 L16.17 13.47 L15.72 14.49 L14.78 14.09 L14.09 14.75 L14.44 15.71 L13.40 16.11 L13.01 15.17 L12.06 15.15 L11.63 16.07 L10.61 15.62 L11.01 14.68 L10.35 13.99 L9.39 14.34 L8.99 13.30 L9.93 12.91 L9.95 11.96 L9.03 11.53 L9.48 10.51 L10.42 10.91 L11.11 10.25 L10.76 9.29 L11.80 8.89 L12.19 9.83 L13.14 9.85 L13.57 8.93 L14.59 9.38 L14.19 10.32 L14.85 11.01 L15.81 10.66 L16.21 11.70 L15.27 12.09Z M11.60 12.50 a1.00 1.00 0 1 0 2.00 0 a1.00 1.00 0 1 0 -2.00 0Z" fill="#86a5c3"/>
 <circle cx="12.6" cy="12.5" r="1.9" fill="none" stroke="#c3dbee" stroke-width="0.9"/>
</g><g transform="translate(412,202)" fill-rule="evenodd">
 <path d="M12.75 7.56 L13.98 8.09 L13.49 9.70 L12.17 9.45 L11.58 10.39 L12.39 11.46 L11.16 12.61 L10.14 11.73 L9.16 12.25 L9.32 13.58 L7.68 13.96 L7.24 12.69 L6.14 12.65 L5.61 13.88 L4.00 13.39 L4.25 12.07 L3.31 11.48 L2.24 12.29 L1.09 11.06 L1.97 10.04 L1.45 9.06 L0.12 9.22 L-0.26 7.58 L1.01 7.14 L1.05 6.04 L-0.18 5.51 L0.31 3.90 L1.63 4.15 L2.22 3.21 L1.41 2.14 L2.64 0.99 L3.66 1.87 L4.64 1.35 L4.48 0.02 L6.12 -0.36 L6.56 0.91 L7.66 0.95 L8.19 -0.28 L9.80 0.21 L9.55 1.53 L10.49 2.12 L11.56 1.31 L12.71 2.54 L11.83 3.56 L12.35 4.54 L13.68 4.38 L14.06 6.02 L12.79 6.46Z M4.80 6.80 a2.10 2.10 0 1 0 4.20 0 a2.10 2.10 0 1 0 -4.20 0Z" fill="#7396ba"/>
 <circle cx="6.9" cy="6.8" r="4.3" fill="none" stroke="#9dbcd8" stroke-width="2.4"/>
 <circle cx="6.9" cy="6.8" r="3.9" fill="none" stroke="#c2def2" stroke-width="1.5"/>
 <circle cx="6.9" cy="6.8" r="2.5" fill="none" stroke="#76869a" stroke-width="0.9"/>
 <path d="M15.25 13.04 L16.17 13.47 L15.72 14.49 L14.78 14.09 L14.09 14.75 L14.44 15.71 L13.40 16.11 L13.01 15.17 L12.06 15.15 L11.63 16.07 L10.61 15.62 L11.01 14.68 L10.35 13.99 L9.39 14.34 L8.99 13.30 L9.93 12.91 L9.95 11.96 L9.03 11.53 L9.48 10.51 L10.42 10.91 L11.11 10.25 L10.76 9.29 L11.80 8.89 L12.19 9.83 L13.14 9.85 L13.57 8.93 L14.59 9.38 L14.19 10.32 L14.85 11.01 L15.81 10.66 L16.21 11.70 L15.27 12.09Z M11.60 12.50 a1.00 1.00 0 1 0 2.00 0 a1.00 1.00 0 1 0 -2.00 0Z" fill="#86a5c3"/>
 <circle cx="12.6" cy="12.5" r="1.9" fill="none" stroke="#c3dbee" stroke-width="0.9"/>
 <path d="M12.75 7.56 L13.98 8.09 L13.49 9.70 L12.17 9.45 L11.58 10.39 L12.39 11.46 L11.16 12.61 L10.14 11.73 L9.16 12.25 L9.32 13.58 L7.68 13.96 L7.24 12.69 L6.14 12.65 L5.61 13.88 L4.00 13.39 L4.25 12.07 L3.31 11.48 L2.24 12.29 L1.09 11.06 L1.97 10.04 L1.45 9.06 L0.12 9.22 L-0.26 7.58 L1.01 7.14 L1.05 6.04 L-0.18 5.51 L0.31 3.90 L1.63 4.15 L2.22 3.21 L1.41 2.14 L2.64 0.99 L3.66 1.87 L4.64 1.35 L4.48 0.02 L6.12 -0.36 L6.56 0.91 L7.66 0.95 L8.19 -0.28 L9.80 0.21 L9.55 1.53 L10.49 2.12 L11.56 1.31 L12.71 2.54 L11.83 3.56 L12.35 4.54 L13.68 4.38 L14.06 6.02 L12.79 6.46Z M4.80 6.80 a2.10 2.10 0 1 0 4.20 0 a2.10 2.10 0 1 0 -4.20 0Z" fill="url(#dith)"/><path d="M15.25 13.04 L16.17 13.47 L15.72 14.49 L14.78 14.09 L14.09 14.75 L14.44 15.71 L13.40 16.11 L13.01 15.17 L12.06 15.15 L11.63 16.07 L10.61 15.62 L11.01 14.68 L10.35 13.99 L9.39 14.34 L8.99 13.30 L9.93 12.91 L9.95 11.96 L9.03 11.53 L9.48 10.51 L10.42 10.91 L11.11 10.25 L10.76 9.29 L11.80 8.89 L12.19 9.83 L13.14 9.85 L13.57 8.93 L14.59 9.38 L14.19 10.32 L14.85 11.01 L15.81 10.66 L16.21 11.70 L15.27 12.09Z M11.60 12.50 a1.00 1.00 0 1 0 2.00 0 a1.00 1.00 0 1 0 -2.00 0Z" fill="url(#dith)"/>
</g><g transform="translate(412,223)" fill-rule="evenodd">
 <path d="M12.75 7.56 L13.98 8.09 L13.49 9.70 L12.17 9.45 L11.58 10.39 L12.39 11.46 L11.16 12.61 L10.14 11.73 L9.16 12.25 L9.32 13.58 L7.68 13.96 L7.24 12.69 L6.14 12.65 L5.61 13.88 L4.00 13.39 L4.25 12.07 L3.31 11.48 L2.24 12.29 L1.09 11.06 L1.97 10.04 L1.45 9.06 L0.12 9.22 L-0.26 7.58 L1.01 7.14 L1.05 6.04 L-0.18 5.51 L0.31 3.90 L1.63 4.15 L2.22 3.21 L1.41 2.14 L2.64 0.99 L3.66 1.87 L4.64 1.35 L4.48 0.02 L6.12 -0.36 L6.56 0.91 L7.66 0.95 L8.19 -0.28 L9.80 0.21 L9.55 1.53 L10.49 2.12 L11.56 1.31 L12.71 2.54 L11.83 3.56 L12.35 4.54 L13.68 4.38 L14.06 6.02 L12.79 6.46Z M4.80 6.80 a2.10 2.10 0 1 0 4.20 0 a2.10 2.10 0 1 0 -4.20 0Z" fill="#7396ba"/>
 <circle cx="6.9" cy="6.8" r="4.3" fill="none" stroke="#9dbcd8" stroke-width="2.4"/>
 <circle cx="6.9" cy="6.8" r="3.9" fill="none" stroke="#c2def2" stroke-width="1.5"/>
 <circle cx="6.9" cy="6.8" r="2.5" fill="none" stroke="#76869a" stroke-width="0.9"/>
 <path d="M15.25 13.04 L16.17 13.47 L15.72 14.49 L14.78 14.09 L14.09 14.75 L14.44 15.71 L13.40 16.11 L13.01 15.17 L12.06 15.15 L11.63 16.07 L10.61 15.62 L11.01 14.68 L10.35 13.99 L9.39 14.34 L8.99 13.30 L9.93 12.91 L9.95 11.96 L9.03 11.53 L9.48 10.51 L10.42 10.91 L11.11 10.25 L10.76 9.29 L11.80 8.89 L12.19 9.83 L13.14 9.85 L13.57 8.93 L14.59 9.38 L14.19 10.32 L14.85 11.01 L15.81 10.66 L16.21 11.70 L15.27 12.09Z M11.60 12.50 a1.00 1.00 0 1 0 2.00 0 a1.00 1.00 0 1 0 -2.00 0Z" fill="#86a5c3"/>
 <circle cx="12.6" cy="12.5" r="1.9" fill="none" stroke="#c3dbee" stroke-width="0.9"/>
</g><g transform="translate(412,244)" fill-rule="evenodd">
 <path d="M12.75 7.56 L13.98 8.09 L13.49 9.70 L12.17 9.45 L11.58 10.39 L12.39 11.46 L11.16 12.61 L10.14 11.73 L9.16 12.25 L9.32 13.58 L7.68 13.96 L7.24 12.69 L6.14 12.65 L5.61 13.88 L4.00 13.39 L4.25 12.07 L3.31 11.48 L2.24 12.29 L1.09 11.06 L1.97 10.04 L1.45 9.06 L0.12 9.22 L-0.26 7.58 L1.01 7.14 L1.05 6.04 L-0.18 5.51 L0.31 3.90 L1.63 4.15 L2.22 3.21 L1.41 2.14 L2.64 0.99 L3.66 1.87 L4.64 1.35 L4.48 0.02 L6.12 -0.36 L6.56 0.91 L7.66 0.95 L8.19 -0.28 L9.80 0.21 L9.55 1.53 L10.49 2.12 L11.56 1.31 L12.71 2.54 L11.83 3.56 L12.35 4.54 L13.68 4.38 L14.06 6.02 L12.79 6.46Z M4.80 6.80 a2.10 2.10 0 1 0 4.20 0 a2.10 2.10 0 1 0 -4.20 0Z" fill="#7396ba"/>
 <circle cx="6.9" cy="6.8" r="4.3" fill="none" stroke="#9dbcd8" stroke-width="2.4"/>
 <circle cx="6.9" cy="6.8" r="3.9" fill="none" stroke="#c2def2" stroke-width="1.5"/>
 <circle cx="6.9" cy="6.8" r="2.5" fill="none" stroke="#76869a" stroke-width="0.9"/>
 <path d="M15.25 13.04 L16.17 13.47 L15.72 14.49 L14.78 14.09 L14.09 14.75 L14.44 15.71 L13.40 16.11 L13.01 15.17 L12.06 15.15 L11.63 16.07 L10.61 15.62 L11.01 14.68 L10.35 13.99 L9.39 14.34 L8.99 13.30 L9.93 12.91 L9.95 11.96 L9.03 11.53 L9.48 10.51 L10.42 10.91 L11.11 10.25 L10.76 9.29 L11.80 8.89 L12.19 9.83 L13.14 9.85 L13.57 8.93 L14.59 9.38 L14.19 10.32 L14.85 11.01 L15.81 10.66 L16.21 11.70 L15.27 12.09Z M11.60 12.50 a1.00 1.00 0 1 0 2.00 0 a1.00 1.00 0 1 0 -2.00 0Z" fill="#86a5c3"/>
 <circle cx="12.6" cy="12.5" r="1.9" fill="none" stroke="#c3dbee" stroke-width="0.9"/>
</g><g transform="translate(412,265)" fill-rule="evenodd">
 <path d="M12.75 7.56 L13.98 8.09 L13.49 9.70 L12.17 9.45 L11.58 10.39 L12.39 11.46 L11.16 12.61 L10.14 11.73 L9.16 12.25 L9.32 13.58 L7.68 13.96 L7.24 12.69 L6.14 12.65 L5.61 13.88 L4.00 13.39 L4.25 12.07 L3.31 11.48 L2.24 12.29 L1.09 11.06 L1.97 10.04 L1.45 9.06 L0.12 9.22 L-0.26 7.58 L1.01 7.14 L1.05 6.04 L-0.18 5.51 L0.31 3.90 L1.63 4.15 L2.22 3.21 L1.41 2.14 L2.64 0.99 L3.66 1.87 L4.64 1.35 L4.48 0.02 L6.12 -0.36 L6.56 0.91 L7.66 0.95 L8.19 -0.28 L9.80 0.21 L9.55 1.53 L10.49 2.12 L11.56 1.31 L12.71 2.54 L11.83 3.56 L12.35 4.54 L13.68 4.38 L14.06 6.02 L12.79 6.46Z M4.80 6.80 a2.10 2.10 0 1 0 4.20 0 a2.10 2.10 0 1 0 -4.20 0Z" fill="#7396ba"/>
 <circle cx="6.9" cy="6.8" r="4.3" fill="none" stroke="#9dbcd8" stroke-width="2.4"/>
 <circle cx="6.9" cy="6.8" r="3.9" fill="none" stroke="#c2def2" stroke-width="1.5"/>
 <circle cx="6.9" cy="6.8" r="2.5" fill="none" stroke="#76869a" stroke-width="0.9"/>
 <path d="M15.25 13.04 L16.17 13.47 L15.72 14.49 L14.78 14.09 L14.09 14.75 L14.44 15.71 L13.40 16.11 L13.01 15.17 L12.06 15.15 L11.63 16.07 L10.61 15.62 L11.01 14.68 L10.35 13.99 L9.39 14.34 L8.99 13.30 L9.93 12.91 L9.95 11.96 L9.03 11.53 L9.48 10.51 L10.42 10.91 L11.11 10.25 L10.76 9.29 L11.80 8.89 L12.19 9.83 L13.14 9.85 L13.57 8.93 L14.59 9.38 L14.19 10.32 L14.85 11.01 L15.81 10.66 L16.21 11.70 L15.27 12.09Z M11.60 12.50 a1.00 1.00 0 1 0 2.00 0 a1.00 1.00 0 1 0 -2.00 0Z" fill="#86a5c3"/>
 <circle cx="12.6" cy="12.5" r="1.9" fill="none" stroke="#c3dbee" stroke-width="0.9"/>
</g><g transform="translate(412,286)" fill-rule="evenodd">
 <path d="M12.75 7.56 L13.98 8.09 L13.49 9.70 L12.17 9.45 L11.58 10.39 L12.39 11.46 L11.16 12.61 L10.14 11.73 L9.16 12.25 L9.32 13.58 L7.68 13.96 L7.24 12.69 L6.14 12.65 L5.61 13.88 L4.00 13.39 L4.25 12.07 L3.31 11.48 L2.24 12.29 L1.09 11.06 L1.97 10.04 L1.45 9.06 L0.12 9.22 L-0.26 7.58 L1.01 7.14 L1.05 6.04 L-0.18 5.51 L0.31 3.90 L1.63 4.15 L2.22 3.21 L1.41 2.14 L2.64 0.99 L3.66 1.87 L4.64 1.35 L4.48 0.02 L6.12 -0.36 L6.56 0.91 L7.66 0.95 L8.19 -0.28 L9.80 0.21 L9.55 1.53 L10.49 2.12 L11.56 1.31 L12.71 2.54 L11.83 3.56 L12.35 4.54 L13.68 4.38 L14.06 6.02 L12.79 6.46Z M4.80 6.80 a2.10 2.10 0 1 0 4.20 0 a2.10 2.10 0 1 0 -4.20 0Z" fill="#7396ba"/>
 <circle cx="6.9" cy="6.8" r="4.3" fill="none" stroke="#9dbcd8" stroke-width="2.4"/>
 <circle cx="6.9" cy="6.8" r="3.9" fill="none" stroke="#c2def2" stroke-width="1.5"/>
 <circle cx="6.9" cy="6.8" r="2.5" fill="none" stroke="#76869a" stroke-width="0.9"/>
 <path d="M15.25 13.04 L16.17 13.47 L15.72 14.49 L14.78 14.09 L14.09 14.75 L14.44 15.71 L13.40 16.11 L13.01 15.17 L12.06 15.15 L11.63 16.07 L10.61 15.62 L11.01 14.68 L10.35 13.99 L9.39 14.34 L8.99 13.30 L9.93 12.91 L9.95 11.96 L9.03 11.53 L9.48 10.51 L10.42 10.91 L11.11 10.25 L10.76 9.29 L11.80 8.89 L12.19 9.83 L13.14 9.85 L13.57 8.93 L14.59 9.38 L14.19 10.32 L14.85 11.01 L15.81 10.66 L16.21 11.70 L15.27 12.09Z M11.60 12.50 a1.00 1.00 0 1 0 2.00 0 a1.00 1.00 0 1 0 -2.00 0Z" fill="#86a5c3"/>
 <circle cx="12.6" cy="12.5" r="1.9" fill="none" stroke="#c3dbee" stroke-width="0.9"/>
</g><g transform="translate(412,307)" fill-rule="evenodd">
 <path d="M12.75 7.56 L13.98 8.09 L13.49 9.70 L12.17 9.45 L11.58 10.39 L12.39 11.46 L11.16 12.61 L10.14 11.73 L9.16 12.25 L9.32 13.58 L7.68 13.96 L7.24 12.69 L6.14 12.65 L5.61 13.88 L4.00 13.39 L4.25 12.07 L3.31 11.48 L2.24 12.29 L1.09 11.06 L1.97 10.04 L1.45 9.06 L0.12 9.22 L-0.26 7.58 L1.01 7.14 L1.05 6.04 L-0.18 5.51 L0.31 3.90 L1.63 4.15 L2.22 3.21 L1.41 2.14 L2.64 0.99 L3.66 1.87 L4.64 1.35 L4.48 0.02 L6.12 -0.36 L6.56 0.91 L7.66 0.95 L8.19 -0.28 L9.80 0.21 L9.55 1.53 L10.49 2.12 L11.56 1.31 L12.71 2.54 L11.83 3.56 L12.35 4.54 L13.68 4.38 L14.06 6.02 L12.79 6.46Z M4.80 6.80 a2.10 2.10 0 1 0 4.20 0 a2.10 2.10 0 1 0 -4.20 0Z" fill="#7396ba"/>
 <circle cx="6.9" cy="6.8" r="4.3" fill="none" stroke="#9dbcd8" stroke-width="2.4"/>
 <circle cx="6.9" cy="6.8" r="3.9" fill="none" stroke="#c2def2" stroke-width="1.5"/>
 <circle cx="6.9" cy="6.8" r="2.5" fill="none" stroke="#76869a" stroke-width="0.9"/>
 <path d="M15.25 13.04 L16.17 13.47 L15.72 14.49 L14.78 14.09 L14.09 14.75 L14.44 15.71 L13.40 16.11 L13.01 15.17 L12.06 15.15 L11.63 16.07 L10.61 15.62 L11.01 14.68 L10.35 13.99 L9.39 14.34 L8.99 13.30 L9.93 12.91 L9.95 11.96 L9.03 11.53 L9.48 10.51 L10.42 10.91 L11.11 10.25 L10.76 9.29 L11.80 8.89 L12.19 9.83 L13.14 9.85 L13.57 8.93 L14.59 9.38 L14.19 10.32 L14.85 11.01 L15.81 10.66 L16.21 11.70 L15.27 12.09Z M11.60 12.50 a1.00 1.00 0 1 0 2.00 0 a1.00 1.00 0 1 0 -2.00 0Z" fill="#86a5c3"/>
 <circle cx="12.6" cy="12.5" r="1.9" fill="none" stroke="#c3dbee" stroke-width="0.9"/>
</g><g transform="translate(412,328)" fill-rule="evenodd">
 <path d="M12.75 7.56 L13.98 8.09 L13.49 9.70 L12.17 9.45 L11.58 10.39 L12.39 11.46 L11.16 12.61 L10.14 11.73 L9.16 12.25 L9.32 13.58 L7.68 13.96 L7.24 12.69 L6.14 12.65 L5.61 13.88 L4.00 13.39 L4.25 12.07 L3.31 11.48 L2.24 12.29 L1.09 11.06 L1.97 10.04 L1.45 9.06 L0.12 9.22 L-0.26 7.58 L1.01 7.14 L1.05 6.04 L-0.18 5.51 L0.31 3.90 L1.63 4.15 L2.22 3.21 L1.41 2.14 L2.64 0.99 L3.66 1.87 L4.64 1.35 L4.48 0.02 L6.12 -0.36 L6.56 0.91 L7.66 0.95 L8.19 -0.28 L9.80 0.21 L9.55 1.53 L10.49 2.12 L11.56 1.31 L12.71 2.54 L11.83 3.56 L12.35 4.54 L13.68 4.38 L14.06 6.02 L12.79 6.46Z M4.80 6.80 a2.10 2.10 0 1 0 4.20 0 a2.10 2.10 0 1 0 -4.20 0Z" fill="#7396ba"/>
 <circle cx="6.9" cy="6.8" r="4.3" fill="none" stroke="#9dbcd8" stroke-width="2.4"/>
 <circle cx="6.9" cy="6.8" r="3.9" fill="none" stroke="#c2def2" stroke-width="1.5"/>
 <circle cx="6.9" cy="6.8" r="2.5" fill="none" stroke="#76869a" stroke-width="0.9"/>
 <path d="M15.25 13.04 L16.17 13.47 L15.72 14.49 L14.78 14.09 L14.09 14.75 L14.44 15.71 L13.40 16.11 L13.01 15.17 L12.06 15.15 L11.63 16.07 L10.61 15.62 L11.01 14.68 L10.35 13.99 L9.39 14.34 L8.99 13.30 L9.93 12.91 L9.95 11.96 L9.03 11.53 L9.48 10.51 L10.42 10.91 L11.11 10.25 L10.76 9.29 L11.80 8.89 L12.19 9.83 L13.14 9.85 L13.57 8.93 L14.59 9.38 L14.19 10.32 L14.85 11.01 L15.81 10.66 L16.21 11.70 L15.27 12.09Z M11.60 12.50 a1.00 1.00 0 1 0 2.00 0 a1.00 1.00 0 1 0 -2.00 0Z" fill="#86a5c3"/>
 <circle cx="12.6" cy="12.5" r="1.9" fill="none" stroke="#c3dbee" stroke-width="0.9"/>
</g><g transform="translate(412,349)" fill-rule="evenodd">
 <path d="M12.75 7.56 L13.98 8.09 L13.49 9.70 L12.17 9.45 L11.58 10.39 L12.39 11.46 L11.16 12.61 L10.14 11.73 L9.16 12.25 L9.32 13.58 L7.68 13.96 L7.24 12.69 L6.14 12.65 L5.61 13.88 L4.00 13.39 L4.25 12.07 L3.31 11.48 L2.24 12.29 L1.09 11.06 L1.97 10.04 L1.45 9.06 L0.12 9.22 L-0.26 7.58 L1.01 7.14 L1.05 6.04 L-0.18 5.51 L0.31 3.90 L1.63 4.15 L2.22 3.21 L1.41 2.14 L2.64 0.99 L3.66 1.87 L4.64 1.35 L4.48 0.02 L6.12 -0.36 L6.56 0.91 L7.66 0.95 L8.19 -0.28 L9.80 0.21 L9.55 1.53 L10.49 2.12 L11.56 1.31 L12.71 2.54 L11.83 3.56 L12.35 4.54 L13.68 4.38 L14.06 6.02 L12.79 6.46Z M4.80 6.80 a2.10 2.10 0 1 0 4.20 0 a2.10 2.10 0 1 0 -4.20 0Z" fill="#7396ba"/>
 <circle cx="6.9" cy="6.8" r="4.3" fill="none" stroke="#9dbcd8" stroke-width="2.4"/>
 <circle cx="6.9" cy="6.8" r="3.9" fill="none" stroke="#c2def2" stroke-width="1.5"/>
 <circle cx="6.9" cy="6.8" r="2.5" fill="none" stroke="#76869a" stroke-width="0.9"/>
 <path d="M15.25 13.04 L16.17 13.47 L15.72 14.49 L14.78 14.09 L14.09 14.75 L14.44 15.71 L13.40 16.11 L13.01 15.17 L12.06 15.15 L11.63 16.07 L10.61 15.62 L11.01 14.68 L10.35 13.99 L9.39 14.34 L8.99 13.30 L9.93 12.91 L9.95 11.96 L9.03 11.53 L9.48 10.51 L10.42 10.91 L11.11 10.25 L10.76 9.29 L11.80 8.89 L12.19 9.83 L13.14 9.85 L13.57 8.93 L14.59 9.38 L14.19 10.32 L14.85 11.01 L15.81 10.66 L16.21 11.70 L15.27 12.09Z M11.60 12.50 a1.00 1.00 0 1 0 2.00 0 a1.00 1.00 0 1 0 -2.00 0Z" fill="#86a5c3"/>
 <circle cx="12.6" cy="12.5" r="1.9" fill="none" stroke="#c3dbee" stroke-width="0.9"/>
</g><g transform="translate(412,370)" fill-rule="evenodd">
 <path d="M12.75 7.56 L13.98 8.09 L13.49 9.70 L12.17 9.45 L11.58 10.39 L12.39 11.46 L11.16 12.61 L10.14 11.73 L9.16 12.25 L9.32 13.58 L7.68 13.96 L7.24 12.69 L6.14 12.65 L5.61 13.88 L4.00 13.39 L4.25 12.07 L3.31 11.48 L2.24 12.29 L1.09 11.06 L1.97 10.04 L1.45 9.06 L0.12 9.22 L-0.26 7.58 L1.01 7.14 L1.05 6.04 L-0.18 5.51 L0.31 3.90 L1.63 4.15 L2.22 3.21 L1.41 2.14 L2.64 0.99 L3.66 1.87 L4.64 1.35 L4.48 0.02 L6.12 -0.36 L6.56 0.91 L7.66 0.95 L8.19 -0.28 L9.80 0.21 L9.55 1.53 L10.49 2.12 L11.56 1.31 L12.71 2.54 L11.83 3.56 L12.35 4.54 L13.68 4.38 L14.06 6.02 L12.79 6.46Z M4.80 6.80 a2.10 2.10 0 1 0 4.20 0 a2.10 2.10 0 1 0 -4.20 0Z" fill="#7396ba"/>
 <circle cx="6.9" cy="6.8" r="4.3" fill="none" stroke="#9dbcd8" stroke-width="2.4"/>
 <circle cx="6.9" cy="6.8" r="3.9" fill="none" stroke="#c2def2" stroke-width="1.5"/>
 <circle cx="6.9" cy="6.8" r="2.5" fill="none" stroke="#76869a" stroke-width="0.9"/>
 <path d="M15.25 13.04 L16.17 13.47 L15.72 14.49 L14.78 14.09 L14.09 14.75 L14.44 15.71 L13.40 16.11 L13.01 15.17 L12.06 15.15 L11.63 16.07 L10.61 15.62 L11.01 14.68 L10.35 13.99 L9.39 14.34 L8.99 13.30 L9.93 12.91 L9.95 11.96 L9.03 11.53 L9.48 10.51 L10.42 10.91 L11.11 10.25 L10.76 9.29 L11.80 8.89 L12.19 9.83 L13.14 9.85 L13.57 8.93 L14.59 9.38 L14.19 10.32 L14.85 11.01 L15.81 10.66 L16.21 11.70 L15.27 12.09Z M11.60 12.50 a1.00 1.00 0 1 0 2.00 0 a1.00 1.00 0 1 0 -2.00 0Z" fill="#86a5c3"/>
 <circle cx="12.6" cy="12.5" r="1.9" fill="none" stroke="#c3dbee" stroke-width="0.9"/>
</g><g transform="translate(412,391)" fill-rule="evenodd">
 <path d="M12.75 7.56 L13.98 8.09 L13.49 9.70 L12.17 9.45 L11.58 10.39 L12.39 11.46 L11.16 12.61 L10.14 11.73 L9.16 12.25 L9.32 13.58 L7.68 13.96 L7.24 12.69 L6.14 12.65 L5.61 13.88 L4.00 13.39 L4.25 12.07 L3.31 11.48 L2.24 12.29 L1.09 11.06 L1.97 10.04 L1.45 9.06 L0.12 9.22 L-0.26 7.58 L1.01 7.14 L1.05 6.04 L-0.18 5.51 L0.31 3.90 L1.63 4.15 L2.22 3.21 L1.41 2.14 L2.64 0.99 L3.66 1.87 L4.64 1.35 L4.48 0.02 L6.12 -0.36 L6.56 0.91 L7.66 0.95 L8.19 -0.28 L9.80 0.21 L9.55 1.53 L10.49 2.12 L11.56 1.31 L12.71 2.54 L11.83 3.56 L12.35 4.54 L13.68 4.38 L14.06 6.02 L12.79 6.46Z M4.80 6.80 a2.10 2.10 0 1 0 4.20 0 a2.10 2.10 0 1 0 -4.20 0Z" fill="#7396ba"/>
 <circle cx="6.9" cy="6.8" r="4.3" fill="none" stroke="#9dbcd8" stroke-width="2.4"/>
 <circle cx="6.9" cy="6.8" r="3.9" fill="none" stroke="#c2def2" stroke-width="1.5"/>
 <circle cx="6.9" cy="6.8" r="2.5" fill="none" stroke="#76869a" stroke-width="0.9"/>
 <path d="M15.25 13.04 L16.17 13.47 L15.72 14.49 L14.78 14.09 L14.09 14.75 L14.44 15.71 L13.40 16.11 L13.01 15.17 L12.06 15.15 L11.63 16.07 L10.61 15.62 L11.01 14.68 L10.35 13.99 L9.39 14.34 L8.99 13.30 L9.93 12.91 L9.95 11.96 L9.03 11.53 L9.48 10.51 L10.42 10.91 L11.11 10.25 L10.76 9.29 L11.80 8.89 L12.19 9.83 L13.14 9.85 L13.57 8.93 L14.59 9.38 L14.19 10.32 L14.85 11.01 L15.81 10.66 L16.21 11.70 L15.27 12.09Z M11.60 12.50 a1.00 1.00 0 1 0 2.00 0 a1.00 1.00 0 1 0 -2.00 0Z" fill="#86a5c3"/>
 <circle cx="12.6" cy="12.5" r="1.9" fill="none" stroke="#c3dbee" stroke-width="0.9"/>
</g><g transform="translate(412,412)" fill-rule="evenodd">
 <path d="M12.75 7.56 L13.98 8.09 L13.49 9.70 L12.17 9.45 L11.58 10.39 L12.39 11.46 L11.16 12.61 L10.14 11.73 L9.16 12.25 L9.32 13.58 L7.68 13.96 L7.24 12.69 L6.14 12.65 L5.61 13.88 L4.00 13.39 L4.25 12.07 L3.31 11.48 L2.24 12.29 L1.09 11.06 L1.97 10.04 L1.45 9.06 L0.12 9.22 L-0.26 7.58 L1.01 7.14 L1.05 6.04 L-0.18 5.51 L0.31 3.90 L1.63 4.15 L2.22 3.21 L1.41 2.14 L2.64 0.99 L3.66 1.87 L4.64 1.35 L4.48 0.02 L6.12 -0.36 L6.56 0.91 L7.66 0.95 L8.19 -0.28 L9.80 0.21 L9.55 1.53 L10.49 2.12 L11.56 1.31 L12.71 2.54 L11.83 3.56 L12.35 4.54 L13.68 4.38 L14.06 6.02 L12.79 6.46Z M4.80 6.80 a2.10 2.10 0 1 0 4.20 0 a2.10 2.10 0 1 0 -4.20 0Z" fill="#7396ba"/>
 <circle cx="6.9" cy="6.8" r="4.3" fill="none" stroke="#9dbcd8" stroke-width="2.4"/>
 <circle cx="6.9" cy="6.8" r="3.9" fill="none" stroke="#c2def2" stroke-width="1.5"/>
 <circle cx="6.9" cy="6.8" r="2.5" fill="none" stroke="#76869a" stroke-width="0.9"/>
 <path d="M15.25 13.04 L16.17 13.47 L15.72 14.49 L14.78 14.09 L14.09 14.75 L14.44 15.71 L13.40 16.11 L13.01 15.17 L12.06 15.15 L11.63 16.07 L10.61 15.62 L11.01 14.68 L10.35 13.99 L9.39 14.34 L8.99 13.30 L9.93 12.91 L9.95 11.96 L9.03 11.53 L9.48 10.51 L10.42 10.91 L11.11 10.25 L10.76 9.29 L11.80 8.89 L12.19 9.83 L13.14 9.85 L13.57 8.93 L14.59 9.38 L14.19 10.32 L14.85 11.01 L15.81 10.66 L16.21 11.70 L15.27 12.09Z M11.60 12.50 a1.00 1.00 0 1 0 2.00 0 a1.00 1.00 0 1 0 -2.00 0Z" fill="#86a5c3"/>
 <circle cx="12.6" cy="12.5" r="1.9" fill="none" stroke="#c3dbee" stroke-width="0.9"/>
</g><g transform="translate(412,433)" fill-rule="evenodd">
 <path d="M12.75 7.56 L13.98 8.09 L13.49 9.70 L12.17 9.45 L11.58 10.39 L12.39 11.46 L11.16 12.61 L10.14 11.73 L9.16 12.25 L9.32 13.58 L7.68 13.96 L7.24 12.69 L6.14 12.65 L5.61 13.88 L4.00 13.39 L4.25 12.07 L3.31 11.48 L2.24 12.29 L1.09 11.06 L1.97 10.04 L1.45 9.06 L0.12 9.22 L-0.26 7.58 L1.01 7.14 L1.05 6.04 L-0.18 5.51 L0.31 3.90 L1.63 4.15 L2.22 3.21 L1.41 2.14 L2.64 0.99 L3.66 1.87 L4.64 1.35 L4.48 0.02 L6.12 -0.36 L6.56 0.91 L7.66 0.95 L8.19 -0.28 L9.80 0.21 L9.55 1.53 L10.49 2.12 L11.56 1.31 L12.71 2.54 L11.83 3.56 L12.35 4.54 L13.68 4.38 L14.06 6.02 L12.79 6.46Z M4.80 6.80 a2.10 2.10 0 1 0 4.20 0 a2.10 2.10 0 1 0 -4.20 0Z" fill="#7396ba"/>
 <circle cx="6.9" cy="6.8" r="4.3" fill="none" stroke="#9dbcd8" stroke-width="2.4"/>
 <circle cx="6.9" cy="6.8" r="3.9" fill="none" stroke="#c2def2" stroke-width="1.5"/>
 <circle cx="6.9" cy="6.8" r="2.5" fill="none" stroke="#76869a" stroke-width="0.9"/>
 <path d="M15.25 13.04 L16.17 13.47 L15.72 14.49 L14.78 14.09 L14.09 14.75 L14.44 15.71 L13.40 16.11 L13.01 15.17 L12.06 15.15 L11.63 16.07 L10.61 15.62 L11.01 14.68 L10.35 13.99 L9.39 14.34 L8.99 13.30 L9.93 12.91 L9.95 11.96 L9.03 11.53 L9.48 10.51 L10.42 10.91 L11.11 10.25 L10.76 9.29 L11.80 8.89 L12.19 9.83 L13.14 9.85 L13.57 8.93 L14.59 9.38 L14.19 10.32 L14.85 11.01 L15.81 10.66 L16.21 11.70 L15.27 12.09Z M11.60 12.50 a1.00 1.00 0 1 0 2.00 0 a1.00 1.00 0 1 0 -2.00 0Z" fill="#86a5c3"/>
 <circle cx="12.6" cy="12.5" r="1.9" fill="none" stroke="#c3dbee" stroke-width="0.9"/>
</g><g transform="translate(412,454)" fill-rule="evenodd">
 <path d="M12.75 7.56 L13.98 8.09 L13.49 9.70 L12.17 9.45 L11.58 10.39 L12.39 11.46 L11.16 12.61 L10.14 11.73 L9.16 12.25 L9.32 13.58 L7.68 13.96 L7.24 12.69 L6.14 12.65 L5.61 13.88 L4.00 13.39 L4.25 12.07 L3.31 11.48 L2.24 12.29 L1.09 11.06 L1.97 10.04 L1.45 9.06 L0.12 9.22 L-0.26 7.58 L1.01 7.14 L1.05 6.04 L-0.18 5.51 L0.31 3.90 L1.63 4.15 L2.22 3.21 L1.41 2.14 L2.64 0.99 L3.66 1.87 L4.64 1.35 L4.48 0.02 L6.12 -0.36 L6.56 0.91 L7.66 0.95 L8.19 -0.28 L9.80 0.21 L9.55 1.53 L10.49 2.12 L11.56 1.31 L12.71 2.54 L11.83 3.56 L12.35 4.54 L13.68 4.38 L14.06 6.02 L12.79 6.46Z M4.80 6.80 a2.10 2.10 0 1 0 4.20 0 a2.10 2.10 0 1 0 -4.20 0Z" fill="#7396ba"/>
 <circle cx="6.9" cy="6.8" r="4.3" fill="none" stroke="#9dbcd8" stroke-width="2.4"/>
 <circle cx="6.9" cy="6.8" r="3.9" fill="none" stroke="#c2def2" stroke-width="1.5"/>
 <circle cx="6.9" cy="6.8" r="2.5" fill="none" stroke="#76869a" stroke-width="0.9"/>
 <path d="M15.25 13.04 L16.17 13.47 L15.72 14.49 L14.78 14.09 L14.09 14.75 L14.44 15.71 L13.40 16.11 L13.01 15.17 L12.06 15.15 L11.63 16.07 L10.61 15.62 L11.01 14.68 L10.35 13.99 L9.39 14.34 L8.99 13.30 L9.93 12.91 L9.95 11.96 L9.03 11.53 L9.48 10.51 L10.42 10.91 L11.11 10.25 L10.76 9.29 L11.80 8.89 L12.19 9.83 L13.14 9.85 L13.57 8.93 L14.59 9.38 L14.19 10.32 L14.85 11.01 L15.81 10.66 L16.21 11.70 L15.27 12.09Z M11.60 12.50 a1.00 1.00 0 1 0 2.00 0 a1.00 1.00 0 1 0 -2.00 0Z" fill="#86a5c3"/>
 <circle cx="12.6" cy="12.5" r="1.9" fill="none" stroke="#c3dbee" stroke-width="0.9"/>
</g><g transform="translate(412,475)" fill-rule="evenodd">
 <path d="M12.75 7.56 L13.98 8.09 L13.49 9.70 L12.17 9.45 L11.58 10.39 L12.39 11.46 L11.16 12.61 L10.14 11.73 L9.16 12.25 L9.32 13.58 L7.68 13.96 L7.24 12.69 L6.14 12.65 L5.61 13.88 L4.00 13.39 L4.25 12.07 L3.31 11.48 L2.24 12.29 L1.09 11.06 L1.97 10.04 L1.45 9.06 L0.12 9.22 L-0.26 7.58 L1.01 7.14 L1.05 6.04 L-0.18 5.51 L0.31 3.90 L1.63 4.15 L2.22 3.21 L1.41 2.14 L2.64 0.99 L3.66 1.87 L4.64 1.35 L4.48 0.02 L6.12 -0.36 L6.56 0.91 L7.66 0.95 L8.19 -0.28 L9.80 0.21 L9.55 1.53 L10.49 2.12 L11.56 1.31 L12.71 2.54 L11.83 3.56 L12.35 4.54 L13.68 4.38 L14.06 6.02 L12.79 6.46Z M4.80 6.80 a2.10 2.10 0 1 0 4.20 0 a2.10 2.10 0 1 0 -4.20 0Z" fill="#7396ba"/>
 <circle cx="6.9" cy="6.8" r="4.3" fill="none" stroke="#9dbcd8" stroke-width="2.4"/>
 <circle cx="6.9" cy="6.8" r="3.9" fill="none" stroke="#c2def2" stroke-width="1.5"/>
 <circle cx="6.9" cy="6.8" r="2.5" fill="none" stroke="#76869a" stroke-width="0.9"/>
 <path d="M15.25 13.04 L16.17 13.47 L15.72 14.49 L14.78 14.09 L14.09 14.75 L14.44 15.71 L13.40 16.11 L13.01 15.17 L12.06 15.15 L11.63 16.07 L10.61 15.62 L11.01 14.68 L10.35 13.99 L9.39 14.34 L8.99 13.30 L9.93 12.91 L9.95 11.96 L9.03 11.53 L9.48 10.51 L10.42 10.91 L11.11 10.25 L10.76 9.29 L11.80 8.89 L12.19 9.83 L13.14 9.85 L13.57 8.93 L14.59 9.38 L14.19 10.32 L14.85 11.01 L15.81 10.66 L16.21 11.70 L15.27 12.09Z M11.60 12.50 a1.00 1.00 0 1 0 2.00 0 a1.00 1.00 0 1 0 -2.00 0Z" fill="#86a5c3"/>
 <circle cx="12.6" cy="12.5" r="1.9" fill="none" stroke="#c3dbee" stroke-width="0.9"/>
</g><g transform="translate(412,496)" fill-rule="evenodd">
 <path d="M12.75 7.56 L13.98 8.09 L13.49 9.70 L12.17 9.45 L11.58 10.39 L12.39 11.46 L11.16 12.61 L10.14 11.73 L9.16 12.25 L9.32 13.58 L7.68 13.96 L7.24 12.69 L6.14 12.65 L5.61 13.88 L4.00 13.39 L4.25 12.07 L3.31 11.48 L2.24 12.29 L1.09 11.06 L1.97 10.04 L1.45 9.06 L0.12 9.22 L-0.26 7.58 L1.01 7.14 L1.05 6.04 L-0.18 5.51 L0.31 3.90 L1.63 4.15 L2.22 3.21 L1.41 2.14 L2.64 0.99 L3.66 1.87 L4.64 1.35 L4.48 0.02 L6.12 -0.36 L6.56 0.91 L7.66 0.95 L8.19 -0.28 L9.80 0.21 L9.55 1.53 L10.49 2.12 L11.56 1.31 L12.71 2.54 L11.83 3.56 L12.35 4.54 L13.68 4.38 L14.06 6.02 L12.79 6.46Z M4.80 6.80 a2.10 2.10 0 1 0 4.20 0 a2.10 2.10 0 1 0 -4.20 0Z" fill="#7396ba"/>
 <circle cx="6.9" cy="6.8" r="4.3" fill="none" stroke="#9dbcd8" stroke-width="2.4"/>
 <circle cx="6.9" cy="6.8" r="3.9" fill="none" stroke="#c2def2" stroke-width="1.5"/>
 <circle cx="6.9" cy="6.8" r="2.5" fill="none" stroke="#76869a" stroke-width="0.9"/>
 <path d="M15.25 13.04 L16.17 13.47 L15.72 14.49 L14.78 14.09 L14.09 14.75 L14.44 15.71 L13.40 16.11 L13.01 15.17 L12.06 15.15 L11.63 16.07 L10.61 15.62 L11.01 14.68 L10.35 13.99 L9.39 14.34 L8.99 13.30 L9.93 12.91 L9.95 11.96 L9.03 11.53 L9.48 10.51 L10.42 10.91 L11.11 10.25 L10.76 9.29 L11.80 8.89 L12.19 9.83 L13.14 9.85 L13.57 8.93 L14.59 9.38 L14.19 10.32 L14.85 11.01 L15.81 10.66 L16.21 11.70 L15.27 12.09Z M11.60 12.50 a1.00 1.00 0 1 0 2.00 0 a1.00 1.00 0 1 0 -2.00 0Z" fill="#86a5c3"/>
 <circle cx="12.6" cy="12.5" r="1.9" fill="none" stroke="#c3dbee" stroke-width="0.9"/>
</g><g transform="translate(412,517)" fill-rule="evenodd">
 <path d="M12.75 7.56 L13.98 8.09 L13.49 9.70 L12.17 9.45 L11.58 10.39 L12.39 11.46 L11.16 12.61 L10.14 11.73 L9.16 12.25 L9.32 13.58 L7.68 13.96 L7.24 12.69 L6.14 12.65 L5.61 13.88 L4.00 13.39 L4.25 12.07 L3.31 11.48 L2.24 12.29 L1.09 11.06 L1.97 10.04 L1.45 9.06 L0.12 9.22 L-0.26 7.58 L1.01 7.14 L1.05 6.04 L-0.18 5.51 L0.31 3.90 L1.63 4.15 L2.22 3.21 L1.41 2.14 L2.64 0.99 L3.66 1.87 L4.64 1.35 L4.48 0.02 L6.12 -0.36 L6.56 0.91 L7.66 0.95 L8.19 -0.28 L9.80 0.21 L9.55 1.53 L10.49 2.12 L11.56 1.31 L12.71 2.54 L11.83 3.56 L12.35 4.54 L13.68 4.38 L14.06 6.02 L12.79 6.46Z M4.80 6.80 a2.10 2.10 0 1 0 4.20 0 a2.10 2.10 0 1 0 -4.20 0Z" fill="#7396ba"/>
 <circle cx="6.9" cy="6.8" r="4.3" fill="none" stroke="#9dbcd8" stroke-width="2.4"/>
 <circle cx="6.9" cy="6.8" r="3.9" fill="none" stroke="#c2def2" stroke-width="1.5"/>
 <circle cx="6.9" cy="6.8" r="2.5" fill="none" stroke="#76869a" stroke-width="0.9"/>
 <path d="M15.25 13.04 L16.17 13.47 L15.72 14.49 L14.78 14.09 L14.09 14.75 L14.44 15.71 L13.40 16.11 L13.01 15.17 L12.06 15.15 L11.63 16.07 L10.61 15.62 L11.01 14.68 L10.35 13.99 L9.39 14.34 L8.99 13.30 L9.93 12.91 L9.95 11.96 L9.03 11.53 L9.48 10.51 L10.42 10.91 L11.11 10.25 L10.76 9.29 L11.80 8.89 L12.19 9.83 L13.14 9.85 L13.57 8.93 L14.59 9.38 L14.19 10.32 L14.85 11.01 L15.81 10.66 L16.21 11.70 L15.27 12.09Z M11.60 12.50 a1.00 1.00 0 1 0 2.00 0 a1.00 1.00 0 1 0 -2.00 0Z" fill="#86a5c3"/>
 <circle cx="12.6" cy="12.5" r="1.9" fill="none" stroke="#c3dbee" stroke-width="0.9"/>
</g><g transform="translate(412,538)" fill-rule="evenodd">
 <path d="M12.75 7.56 L13.98 8.09 L13.49 9.70 L12.17 9.45 L11.58 10.39 L12.39 11.46 L11.16 12.61 L10.14 11.73 L9.16 12.25 L9.32 13.58 L7.68 13.96 L7.24 12.69 L6.14 12.65 L5.61 13.88 L4.00 13.39 L4.25 12.07 L3.31 11.48 L2.24 12.29 L1.09 11.06 L1.97 10.04 L1.45 9.06 L0.12 9.22 L-0.26 7.58 L1.01 7.14 L1.05 6.04 L-0.18 5.51 L0.31 3.90 L1.63 4.15 L2.22 3.21 L1.41 2.14 L2.64 0.99 L3.66 1.87 L4.64 1.35 L4.48 0.02 L6.12 -0.36 L6.56 0.91 L7.66 0.95 L8.19 -0.28 L9.80 0.21 L9.55 1.53 L10.49 2.12 L11.56 1.31 L12.71 2.54 L11.83 3.56 L12.35 4.54 L13.68 4.38 L14.06 6.02 L12.79 6.46Z M4.80 6.80 a2.10 2.10 0 1 0 4.20 0 a2.10 2.10 0 1 0 -4.20 0Z" fill="#7396ba"/>
 <circle cx="6.9" cy="6.8" r="4.3" fill="none" stroke="#9dbcd8" stroke-width="2.4"/>
 <circle cx="6.9" cy="6.8" r="3.9" fill="none" stroke="#c2def2" stroke-width="1.5"/>
 <circle cx="6.9" cy="6.8" r="2.5" fill="none" stroke="#76869a" stroke-width="0.9"/>
 <path d="M15.25 13.04 L16.17 13.47 L15.72 14.49 L14.78 14.09 L14.09 14.75 L14.44 15.71 L13.40 16.11 L13.01 15.17 L12.06 15.15 L11.63 16.07 L10.61 15.62 L11.01 14.68 L10.35 13.99 L9.39 14.34 L8.99 13.30 L9.93 12.91 L9.95 11.96 L9.03 11.53 L9.48 10.51 L10.42 10.91 L11.11 10.25 L10.76 9.29 L11.80 8.89 L12.19 9.83 L13.14 9.85 L13.57 8.93 L14.59 9.38 L14.19 10.32 L14.85 11.01 L15.81 10.66 L16.21 11.70 L15.27 12.09Z M11.60 12.50 a1.00 1.00 0 1 0 2.00 0 a1.00 1.00 0 1 0 -2.00 0Z" fill="#86a5c3"/>
 <circle cx="12.6" cy="12.5" r="1.9" fill="none" stroke="#c3dbee" stroke-width="0.9"/>
</g><g transform="translate(412,559)" fill-rule="evenodd">
 <path d="M12.75 7.56 L13.98 8.09 L13.49 9.70 L12.17 9.45 L11.58 10.39 L12.39 11.46 L11.16 12.61 L10.14 11.73 L9.16 12.25 L9.32 13.58 L7.68 13.96 L7.24 12.69 L6.14 12.65 L5.61 13.88 L4.00 13.39 L4.25 12.07 L3.31 11.48 L2.24 12.29 L1.09 11.06 L1.97 10.04 L1.45 9.06 L0.12 9.22 L-0.26 7.58 L1.01 7.14 L1.05 6.04 L-0.18 5.51 L0.31 3.90 L1.63 4.15 L2.22 3.21 L1.41 2.14 L2.64 0.99 L3.66 1.87 L4.64 1.35 L4.48 0.02 L6.12 -0.36 L6.56 0.91 L7.66 0.95 L8.19 -0.28 L9.80 0.21 L9.55 1.53 L10.49 2.12 L11.56 1.31 L12.71 2.54 L11.83 3.56 L12.35 4.54 L13.68 4.38 L14.06 6.02 L12.79 6.46Z M4.80 6.80 a2.10 2.10 0 1 0 4.20 0 a2.10 2.10 0 1 0 -4.20 0Z" fill="#7396ba"/>
 <circle cx="6.9" cy="6.8" r="4.3" fill="none" stroke="#9dbcd8" stroke-width="2.4"/>
 <circle cx="6.9" cy="6.8" r="3.9" fill="none" stroke="#c2def2" stroke-width="1.5"/>
 <circle cx="6.9" cy="6.8" r="2.5" fill="none" stroke="#76869a" stroke-width="0.9"/>
 <path d="M15.25 13.04 L16.17 13.47 L15.72 14.49 L14.78 14.09 L14.09 14.75 L14.44 15.71 L13.40 16.11 L13.01 15.17 L12.06 15.15 L11.63 16.07 L10.61 15.62 L11.01 14.68 L10.35 13.99 L9.39 14.34 L8.99 13.30 L9.93 12.91 L9.95 11.96 L9.03 11.53 L9.48 10.51 L10.42 10.91 L11.11 10.25 L10.76 9.29 L11.80 8.89 L12.19 9.83 L13.14 9.85 L13.57 8.93 L14.59 9.38 L14.19 10.32 L14.85 11.01 L15.81 10.66 L16.21 11.70 L15.27 12.09Z M11.60 12.50 a1.00 1.00 0 1 0 2.00 0 a1.00 1.00 0 1 0 -2.00 0Z" fill="#86a5c3"/>
 <circle cx="12.6" cy="12.5" r="1.9" fill="none" stroke="#c3dbee" stroke-width="0.9"/>
</g><path d="M494.6 117.6 L498.1 114.1 L501.6 117.6" fill="none" stroke="#666" stroke-width="1.1"/><path d="M778.4 124.4 L781.5 120.5 L784.6 124.4" fill="none" stroke="#505050" stroke-width="2.1"/><rect x="866" y="15" width="10" height="1" fill="#000"/><rect x="911.5" y="10.5" width="9" height="9" fill="none" stroke="#000" stroke-width="1"/><path d="M957 10 L967 20 M957 20 L967 10" stroke="#000" stroke-width="1.1"/></svg>
  <div class="abs" style="left:0;top:0;width:959px;height:1px;background:#1883d7"></div>
  <div class="abs" style="left:0;top:0;width:1px;height:573px;background:#1883d7"></div>
</div>
</body>
</html>
